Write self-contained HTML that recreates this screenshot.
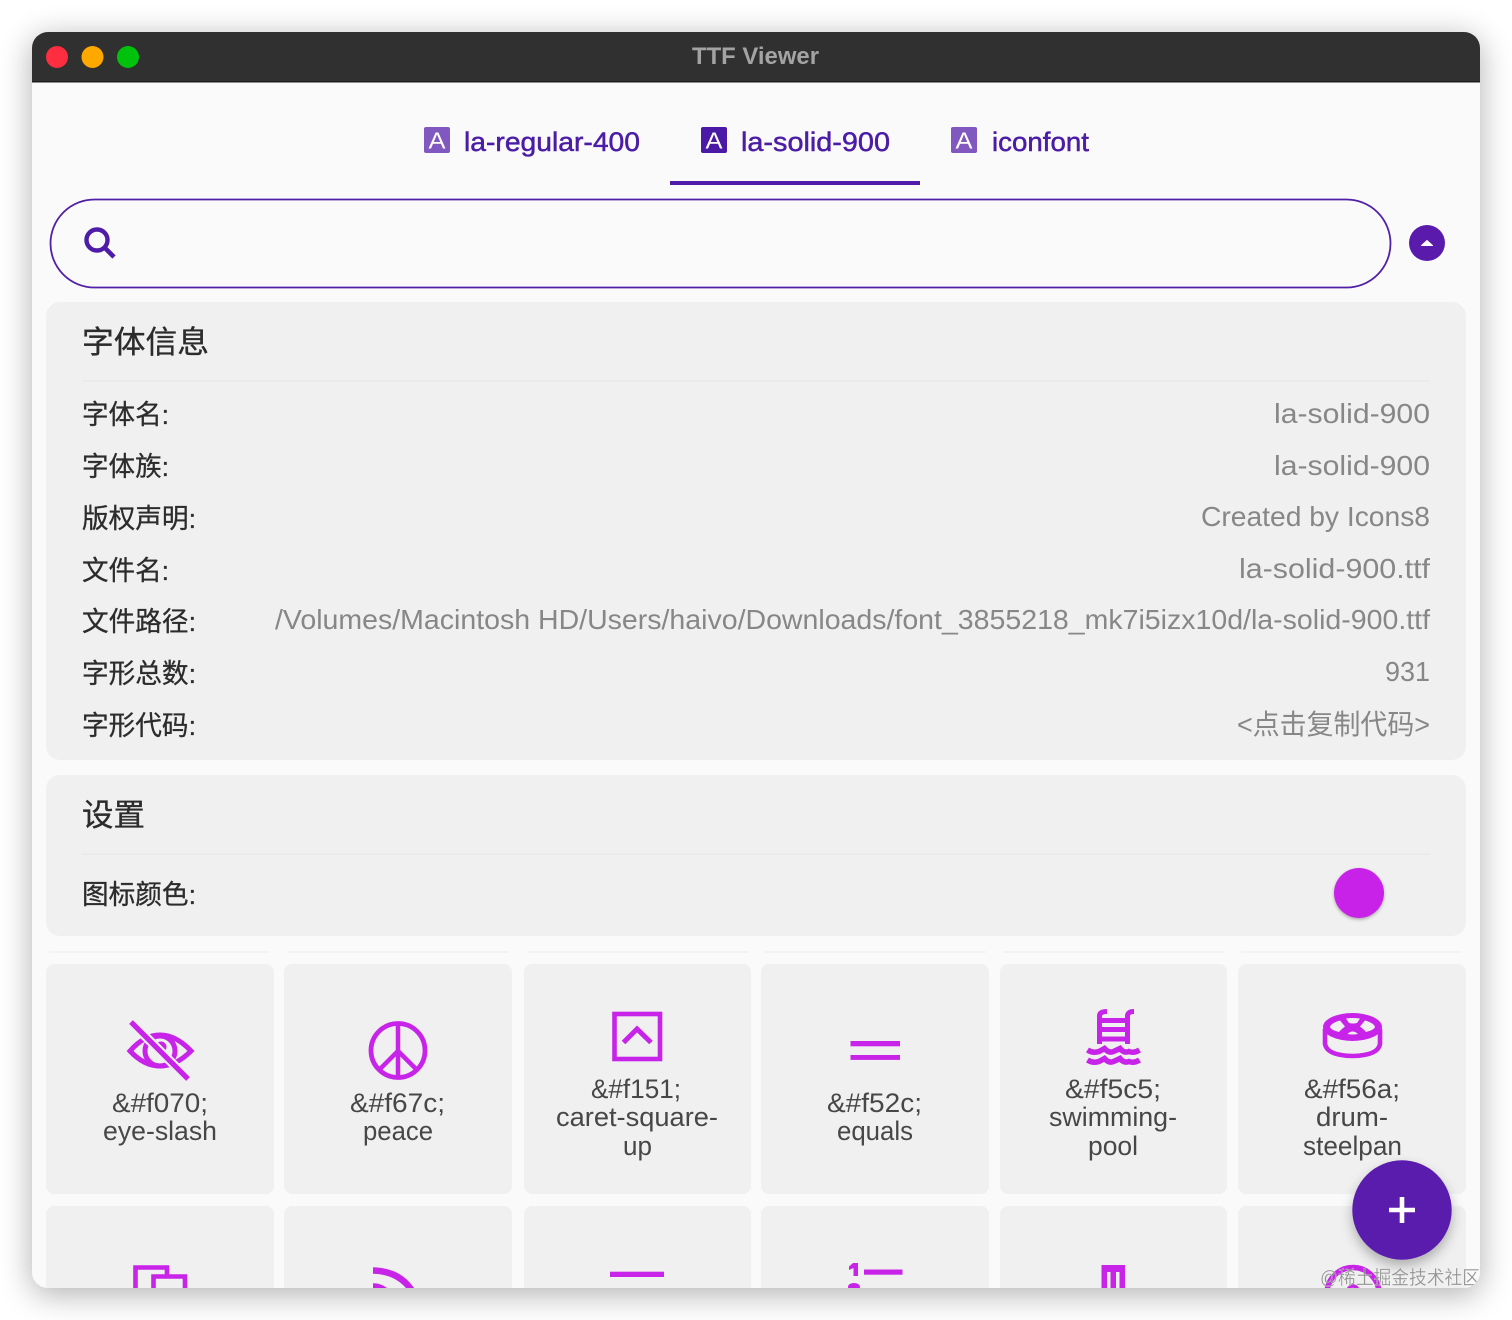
<!DOCTYPE html>
<html lang="zh">
<head>
<meta charset="utf-8">
<title>TTF Viewer</title>
<style>
html,body{margin:0;padding:0;background:#fff;width:1512px;height:1320px;overflow:hidden}
#win{position:absolute;left:32px;top:32px;width:1448px;height:1256px;border-radius:16px;background:#fafafa;box-shadow:0 6px 32px rgba(0,0,0,.32)}
svg{position:absolute;left:0;top:0}
text{font-family:"Liberation Sans","Noto Sans CJK SC",sans-serif}
.t{font-size:27px;fill:#4b1ca6;stroke:#4b1ca6;stroke-width:.5}
.l{font-size:27px;fill:#2c2c2c;stroke:#2c2c2c;stroke-width:.3}
.h{font-size:31px;fill:#2c2c2c;stroke:#2c2c2c;stroke-width:.35}
.v{font-size:28px;fill:#878787}
.c{font-size:26.5px;fill:#474747}
.a{font-size:23px;fill:#fff}
.i{fill:none;stroke:#c823e8}
</style>
</head>
<body>
<div id="win"></div>
<svg width="1512" height="1320" viewBox="0 0 1512 1320" xmlns="http://www.w3.org/2000/svg">
<defs>
<clipPath id="w"><rect x="32" y="32" width="1448" height="1256" rx="16"/></clipPath>
<filter id="s1" x="-30%" y="-30%" width="160%" height="170%"><feDropShadow dx="0" dy="6" stdDeviation="6" flood-color="#000" flood-opacity=".28"/></filter>
<filter id="s2" x="-30%" y="-30%" width="160%" height="170%"><feDropShadow dx="0" dy="1.5" stdDeviation="1.5" flood-color="#000" flood-opacity=".3"/></filter>
</defs>
<g clip-path="url(#w)">
<rect x="32" y="32" width="1448" height="1256" fill="#fafafa"/>
<rect x="32" y="32" width="1448" height="50" fill="#303030"/>
<rect x="32" y="81" width="1448" height="1.5" fill="#1e1e1e"/>
<circle cx="57" cy="57" r="11" fill="#fe2d40"/>
<circle cx="92.5" cy="57" r="11" fill="#ffa800"/>
<circle cx="128" cy="57" r="11" fill="#00c20c"/>
<text x="692" y="64" font-size="24" font-weight="700" fill="#a3a3a3" textLength="127" lengthAdjust="spacingAndGlyphs">TTF Viewer</text>

<rect x="424" y="127" width="26" height="26" rx="2" fill="#8058bf"/>
<text class="a" x="428.5" y="148.5" textLength="17" lengthAdjust="spacingAndGlyphs">A</text>
<text class="t" x="464" y="151" textLength="176" lengthAdjust="spacingAndGlyphs">la-regular-400</text>
<rect x="701" y="127" width="26" height="26" rx="2" fill="#4a19a5"/>
<text class="a" x="705.5" y="148.5" textLength="17" lengthAdjust="spacingAndGlyphs">A</text>
<text class="t" x="741" y="151" textLength="149" lengthAdjust="spacingAndGlyphs">la-solid-900</text>
<rect x="951" y="127" width="26" height="26" rx="2" fill="#8058bf"/>
<text class="a" x="955.5" y="148.5" textLength="17" lengthAdjust="spacingAndGlyphs">A</text>
<text class="t" x="992" y="151" textLength="97" lengthAdjust="spacingAndGlyphs">iconfont</text>
<rect x="670" y="181" width="250" height="4" fill="#4e1ca8"/>

<rect x="50.5" y="199.5" width="1340" height="88" rx="44" fill="#fafafa" stroke="#5020a8" stroke-width="1.8"/>
<circle cx="97" cy="240" r="10.5" fill="none" stroke="#4e1ca8" stroke-width="4.4"/>
<path d="M104.5 247.5L114 257" fill="none" stroke="#4e1ca8" stroke-width="4.6"/>
<circle cx="1427" cy="243" r="18" fill="#5a1bad"/>
<path d="M1421.5 245.5L1427 240.5L1432.5 245.5Z" fill="#fff" stroke="#fff" stroke-width="1" stroke-linejoin="round"/>

<rect x="46" y="302" width="1420" height="458" rx="14" fill="#f0f0f0"/>
<text class="h" x="82" y="353" textLength="127" lengthAdjust="spacingAndGlyphs">字体信息</text>
<rect x="82" y="380" width="1348" height="1.5" fill="#e9e9e9"/>
<text class="l" x="82" y="424" textLength="87" lengthAdjust="spacingAndGlyphs">字体名:</text>
<text class="l" x="82" y="476" textLength="87" lengthAdjust="spacingAndGlyphs">字体族:</text>
<text class="l" x="82" y="528" textLength="114" lengthAdjust="spacingAndGlyphs">版权声明:</text>
<text class="l" x="82" y="580" textLength="87" lengthAdjust="spacingAndGlyphs">文件名:</text>
<text class="l" x="82" y="631" textLength="114" lengthAdjust="spacingAndGlyphs">文件路径:</text>
<text class="l" x="82" y="683" textLength="114" lengthAdjust="spacingAndGlyphs">字形总数:</text>
<text class="l" x="82" y="735" textLength="114" lengthAdjust="spacingAndGlyphs">字形代码:</text>
<text class="v" x="1274" y="423" textLength="156" lengthAdjust="spacingAndGlyphs">la-solid-900</text>
<text class="v" x="1274" y="475" textLength="156" lengthAdjust="spacingAndGlyphs">la-solid-900</text>
<text class="v" x="1201" y="526" textLength="229" lengthAdjust="spacingAndGlyphs">Created by Icons8</text>
<text class="v" x="1239" y="578" textLength="191" lengthAdjust="spacingAndGlyphs">la-solid-900.ttf</text>
<text class="v" x="275" y="629" textLength="1155" lengthAdjust="spacingAndGlyphs">/Volumes/Macintosh HD/Users/haivo/Downloads/font_3855218_mk7i5izx10d/la-solid-900.ttf</text>
<text class="v" x="1385" y="681" textLength="45" lengthAdjust="spacingAndGlyphs">931</text>
<text class="v" x="1237" y="734" textLength="193" lengthAdjust="spacingAndGlyphs">&lt;点击复制代码&gt;</text>

<rect x="46" y="775" width="1420" height="161" rx="14" fill="#f0f0f0"/>
<text class="h" x="82" y="826" textLength="63" lengthAdjust="spacingAndGlyphs">设置</text>
<rect x="82" y="853.5" width="1348" height="1.5" fill="#e9e9e9"/>
<text class="l" x="82" y="904" textLength="114" lengthAdjust="spacingAndGlyphs">图标颜色:</text>
<circle cx="1359" cy="893" r="25" fill="#c823e8" filter="url(#s2)"/>

<g fill="#f3f3f3">
<rect x="49" y="951" width="221" height="2"/><rect x="288" y="951" width="221" height="2"/><rect x="527" y="951" width="221" height="2"/><rect x="765" y="951" width="221" height="2"/><rect x="1003" y="951" width="221" height="2"/><rect x="1241" y="951" width="221" height="2"/>
</g>
<g fill="#f0f0f0">
<rect x="46" y="964" width="228" height="230" rx="8"/><rect x="284" y="964" width="228" height="230" rx="8"/><rect x="524" y="964" width="227" height="230" rx="8"/><rect x="761" y="964" width="228" height="230" rx="8"/><rect x="1000" y="964" width="227" height="230" rx="8"/><rect x="1238" y="964" width="228" height="230" rx="8"/>
<rect x="46" y="1206" width="228" height="120" rx="8"/><rect x="284" y="1206" width="228" height="120" rx="8"/><rect x="524" y="1206" width="227" height="120" rx="8"/><rect x="761" y="1206" width="228" height="120" rx="8"/><rect x="1000" y="1206" width="227" height="120" rx="8"/><rect x="1238" y="1206" width="228" height="120" rx="8"/>
</g>

<!-- eye-slash -->
<path class="i" stroke-width="5" stroke-linejoin="miter" d="M130 1051Q144 1035 160 1035Q176 1035 191 1051Q176 1066 160 1066Q144 1066 130 1051Z"/>
<circle class="i" cx="160" cy="1051" r="15" stroke-width="5"/>
<circle cx="161" cy="1047" r="5.5" fill="#c823e8"/>
<path d="M131 1022L188 1079" fill="none" stroke="#f0f0f0" stroke-width="9.5"/>
<path d="M131 1022L188 1079" fill="none" stroke="#c823e8" stroke-width="5.2"/>
<text class="c" x="112" y="1112" textLength="96" lengthAdjust="spacingAndGlyphs">&amp;#f070;</text>
<text class="c" x="103" y="1140" textLength="114" lengthAdjust="spacingAndGlyphs">eye-slash</text>

<!-- peace -->
<circle class="i" cx="398" cy="1050.5" r="27" stroke-width="4.8"/>
<path class="i" stroke-width="4.5" d="M398 1024V1077M398 1051L379 1070M398 1051L417 1070"/>
<text class="c" x="350" y="1112" textLength="95" lengthAdjust="spacingAndGlyphs">&amp;#f67c;</text>
<text class="c" x="363" y="1140" textLength="70" lengthAdjust="spacingAndGlyphs">peace</text>

<!-- caret-square-up -->
<rect class="i" x="614.5" y="1014" width="45.5" height="45" stroke-width="4.6"/>
<path class="i" stroke-width="5" d="M623.5 1042.5L637 1029L651 1042.5"/>
<text class="c" x="591" y="1098" textLength="90" lengthAdjust="spacingAndGlyphs">&amp;#f151;</text>
<text class="c" x="556" y="1126" textLength="162" lengthAdjust="spacingAndGlyphs">caret-square-</text>
<text class="c" x="623" y="1155" textLength="29" lengthAdjust="spacingAndGlyphs">up</text>

<!-- equals -->
<rect x="850.5" y="1041" width="49.5" height="5.3" fill="#c823e8"/>
<rect x="850.5" y="1055" width="49.5" height="4.9" fill="#c823e8"/>
<text class="c" x="827" y="1112" textLength="95" lengthAdjust="spacingAndGlyphs">&amp;#f52c;</text>
<text class="c" x="837" y="1140" textLength="76" lengthAdjust="spacingAndGlyphs">equals</text>

<!-- swimming-pool -->
<path class="i" stroke-width="5" d="M1099.5 1044V1016Q1099.5 1011.5 1107 1011.5M1127.5 1044V1016Q1127.5 1011.5 1134 1011.5"/>
<path class="i" stroke-width="5" d="M1100 1020.5H1127M1100 1029.5H1127M1100 1039H1127"/>
<path class="i" stroke-width="5.5" d="M1087.5 1050Q1093 1053.5 1099 1051.5Q1102 1050 1104.5 1048.5Q1109 1053.5 1113.5 1051.5Q1117 1050 1120 1048.5Q1124 1053.5 1129 1051.5Q1134 1053.5 1139.5 1050"/>
<path class="i" stroke-width="5.5" d="M1087.5 1060Q1093 1063.5 1099 1061.5Q1102 1060 1104.5 1058.5Q1109 1063.5 1113.5 1061.5Q1117 1060 1120 1058.5Q1124 1063.5 1129 1061.5Q1134 1063.5 1139.5 1060"/>
<text class="c" x="1065" y="1098" textLength="96" lengthAdjust="spacingAndGlyphs">&amp;#f5c5;</text>
<text class="c" x="1049" y="1126" textLength="128" lengthAdjust="spacingAndGlyphs">swimming-</text>
<text class="c" x="1088" y="1155" textLength="50" lengthAdjust="spacingAndGlyphs">pool</text>

<!-- drum-steelpan -->
<ellipse cx="1352.5" cy="1027" rx="29.5" ry="14" fill="#c823e8"/>
<path d="M1325 1029V1044Q1327 1055.5 1352.5 1056Q1378 1055.5 1380 1044V1029" fill="none" stroke="#c823e8" stroke-width="4.6"/>
<path d="M1346 1018.5Q1352.5 1017.5 1360 1018.5L1357 1023Q1352.5 1024 1349 1023Z" fill="#f0f0f0"/>
<path d="M1347.5 1034Q1352.5 1029 1358 1034Q1352.5 1035 1347.5 1034Z" fill="#f0f0f0"/>
<path d="M1340 1020.5L1345 1026.5Q1341 1029.5 1339 1032Q1331 1030 1330 1027Q1331 1023 1340 1020.5Z" fill="#f0f0f0"/>
<path d="M1365 1020.5L1360 1026.5Q1364 1029.5 1366 1032Q1374 1030 1375 1027Q1374 1023 1365 1020.5Z" fill="#f0f0f0"/>
<text class="c" x="1304" y="1098" textLength="96" lengthAdjust="spacingAndGlyphs">&amp;#f56a;</text>
<text class="c" x="1316" y="1126" textLength="72" lengthAdjust="spacingAndGlyphs">drum-</text>
<text class="c" x="1303" y="1155" textLength="99" lengthAdjust="spacingAndGlyphs">steelpan</text>

<!-- second row, clipped -->
<path class="i" stroke-width="4.6" d="M135.5 1290V1267.5H167V1276M153.5 1290V1276.5H185V1290"/>
<path class="i" stroke-width="6.5" d="M373 1270.5Q401 1271 414 1294"/>
<path class="i" stroke-width="5.5" d="M373 1286Q383 1286 389 1294"/>
<rect x="610" y="1271.7" width="54" height="5.3" fill="#c823e8"/>
<path d="M849 1266.5L853 1263H858V1276H853.5V1268L849 1270Z" fill="#c823e8"/>
<rect x="864" y="1269.5" width="38.5" height="5.2" fill="#c823e8"/>
<ellipse cx="854" cy="1287" rx="6" ry="4" fill="#c823e8"/>
<path d="M1101.5 1265H1125V1290H1119.5V1272H1116V1290H1110.5V1272H1107V1290H1101.5Z" fill="#c823e8"/>
<circle class="i" cx="1353" cy="1293.5" r="26" stroke-width="5.5"/>
<circle class="i" cx="1353" cy="1291" r="5" stroke-width="3.5"/>

<circle cx="1402" cy="1210" r="49.7" fill="#5a1cac" filter="url(#s1)"/>
<path d="M1389 1210H1415M1402 1197V1223" stroke="#fff" stroke-width="4.6" fill="none"/>
<text x="1320" y="1284" font-size="19" fill="#858585" fill-opacity=".9" stroke="#fff" stroke-opacity=".5" stroke-width=".4" textLength="160" lengthAdjust="spacingAndGlyphs">@稀土掘金技术社区</text>
</g>
</svg>
</body>
</html>
